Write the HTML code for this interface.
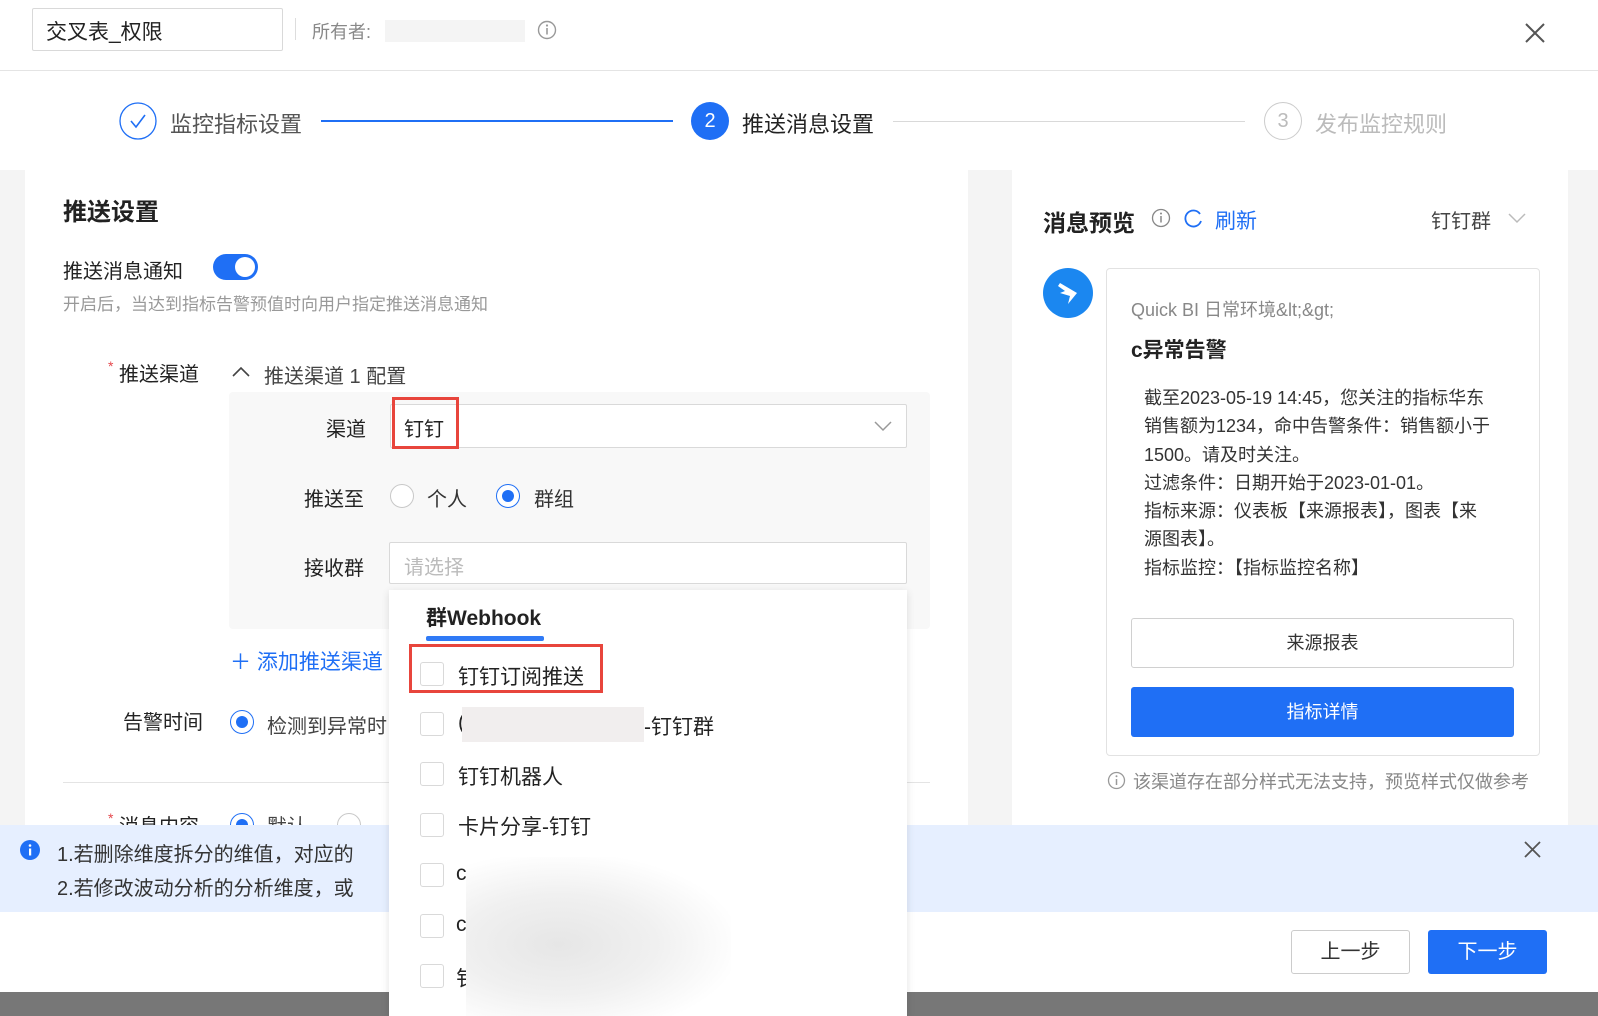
<!DOCTYPE html>
<html><head><meta charset="utf-8"><style>
*{margin:0;padding:0;box-sizing:border-box}
body{width:1598px;height:1016px;position:relative;overflow:hidden;background:#fff;font-family:"Liberation Sans","Noto Sans CJK SC",sans-serif;color:#333}
.a{position:absolute;white-space:nowrap}
.cb{position:absolute;width:24px;height:24px;border:1px solid #d9d9d9;border-radius:3px;background:#fff}
.radio{position:absolute;width:24px;height:24px;border:1px solid #c8c8c8;border-radius:50%;background:#fff}
.radio.on{border-color:#1f6ff5}
.radio.on::after{content:"";position:absolute;left:5px;top:5px;width:12px;height:12px;border-radius:50%;background:#1f6ff5}
</style></head><body>
<div class="a" style="left:32px;top:8px;width:251px;height:43px;border:1px solid #d9d9d9;border-radius:2px"></div>
<div class="a" style="left:46px;top:16px;font-size:21px;color:#222">交叉表_权限</div>
<div class="a" style="left:295px;top:18px;width:1px;height:22px;background:#ddd"></div>
<div class="a" style="left:312px;top:18px;font-size:18px;color:#888">所有者:</div>
<div class="a" style="left:385px;top:20px;width:140px;height:22px;background:#f4f4f4"></div>
<svg class="a" style="left:537px;top:20px" width="20" height="20"><circle cx="10" cy="10" r="8.5" fill="none" stroke="#999" stroke-width="1.4"/><line x1="10" y1="8" x2="10" y2="14.5" stroke="#999" stroke-width="1.6"/><circle cx="10" cy="5.5" r="1.1" fill="#999"/></svg>
<svg class="a" style="left:1524px;top:22px" width="22" height="22"><path d="M2 2L20 20M20 2L2 20" stroke="#555" stroke-width="2"/></svg>
<div class="a" style="left:0;top:70px;width:1598px;height:1px;background:#e4e4e4"></div>
<svg class="a" style="left:119px;top:102px" width="38" height="38"><circle cx="19" cy="19" r="18" fill="#fff" stroke="#1f6ff5" stroke-width="1.3"/><path d="M12 19l5 6 9-12" fill="none" stroke="#1f6ff5" stroke-width="1.6"/></svg>
<div class="a" style="left:170px;top:107px;font-size:22px;color:#555">监控指标设置</div>
<div class="a" style="left:321px;top:120px;width:352px;height:2px;background:#1f6ff5"></div>
<div class="a" style="left:691px;top:102px;width:38px;height:38px;border-radius:50%;background:#1f6ff5;color:#fff;font-size:20px;text-align:center;line-height:38px">2</div>
<div class="a" style="left:742px;top:107px;font-size:22px;color:#222">推送消息设置</div>
<div class="a" style="left:893px;top:121px;width:352px;height:1px;background:#d9d9d9"></div>
<div class="a" style="left:1264px;top:102px;width:38px;height:38px;border-radius:50%;border:1.3px solid #ccc;color:#bbb;font-size:20px;text-align:center;line-height:36px">3</div>
<div class="a" style="left:1315px;top:107px;font-size:22px;color:#bbb">发布监控规则</div>
<div class="a" style="left:0;top:170px;width:1598px;height:655px;background:#f4f4f4"></div>
<div class="a" style="left:25px;top:170px;width:943px;height:655px;background:#fff"></div>
<div class="a" style="left:1012px;top:170px;width:556px;height:655px;background:#fff"></div>
<div class="a" style="left:63px;top:192px;font-size:24px;font-weight:bold;color:#222">推送设置</div>
<div class="a" style="left:63px;top:255px;font-size:20px;color:#222">推送消息通知</div>
<div class="a" style="left:213px;top:254px;width:45px;height:26px;border-radius:13px;background:#1f6ff5"></div>
<div class="a" style="left:235px;top:257px;width:20px;height:20px;border-radius:50%;background:#fff"></div>
<div class="a" style="left:63px;top:290px;font-size:17px;color:#999">开启后，当达到指标告警预值时向用户指定推送消息通知</div>
<div class="a" style="left:108px;top:358px;font-size:20px;color:#222"><span style="color:#e5484d;font-size:14px;vertical-align:top">*</span> 推送渠道</div>
<svg class="a" style="left:232px;top:366px" width="18" height="12"><path d="M1 10l8-8 8 8" fill="none" stroke="#444" stroke-width="1.6"/></svg>
<div class="a" style="left:264px;top:360px;font-size:20px;color:#444">推送渠道 1 配置</div>
<div class="a" style="left:229px;top:392px;width:701px;height:237px;background:#f8f8f8;border-radius:4px"></div>
<div class="a" style="left:326px;top:413px;font-size:20px;color:#222">渠道</div>
<div class="a" style="left:390px;top:404px;width:517px;height:44px;background:#fff;border:1px solid #d9d9d9;border-radius:2px"></div>
<div class="a" style="left:392px;top:397px;width:67px;height:52px;border:3px solid #e8453c"></div>
<div class="a" style="left:404px;top:413px;font-size:20px;color:#222">钉钉</div>
<svg class="a" style="left:874px;top:420px" width="18" height="12"><path d="M1 2l8 8 8-8" fill="none" stroke="#999" stroke-width="1.5"/></svg>
<div class="a" style="left:304px;top:483px;font-size:20px;color:#222">推送至</div>
<div class="radio" style="left:390px;top:484px"></div>
<div class="a" style="left:427px;top:483px;font-size:20px;color:#333">个人</div>
<div class="radio on" style="left:496px;top:484px"></div>
<div class="a" style="left:534px;top:483px;font-size:20px;color:#333">群组</div>
<div class="a" style="left:304px;top:552px;font-size:20px;color:#222">接收群</div>
<div class="a" style="left:389px;top:542px;width:518px;height:42px;background:#fff;border:1px solid #d9d9d9;border-radius:2px"></div>
<div class="a" style="left:404px;top:551px;font-size:20px;color:#bbb">请选择</div>
<div class="a" style="left:230px;top:646px;font-size:21px;color:#1f6ff5">＋ 添加推送渠道</div>
<div class="a" style="left:123px;top:706px;font-size:20px;color:#222">告警时间</div>
<div class="radio on" style="left:230px;top:710px"></div>
<div class="a" style="left:267px;top:710px;font-size:20px;color:#444">检测到异常时</div>
<div class="a" style="left:63px;top:782px;width:867px;height:1px;background:#e4e4e4"></div>
<div class="a" style="left:108px;top:810px;font-size:20px;color:#222"><span style="color:#e5484d;font-size:14px;vertical-align:top">*</span> 消息内容</div>
<div class="radio on" style="left:230px;top:813px"></div>
<div class="a" style="left:267px;top:810px;font-size:20px;color:#444">默认</div>
<div class="radio" style="left:337px;top:813px"></div>
<div class="a" style="left:1043px;top:204px;font-size:23px;font-weight:bold;color:#222">消息预览</div>
<svg class="a" style="left:1151px;top:208px" width="20" height="20"><circle cx="10" cy="10" r="8.5" fill="none" stroke="#888" stroke-width="1.3"/><line x1="10" y1="8" x2="10" y2="14.5" stroke="#888" stroke-width="1.5"/><circle cx="10" cy="5.5" r="1" fill="#888"/></svg>
<svg class="a" style="left:1184px;top:208px" width="20" height="20"><path d="M16 6A8 8 0 1 0 17 13" fill="none" stroke="#1f6ff5" stroke-width="1.8"/></svg>
<div class="a" style="left:1215px;top:205px;font-size:21px;color:#1f6ff5">刷新</div>
<div class="a" style="left:1431px;top:205px;font-size:20px;color:#444">钉钉群</div>
<svg class="a" style="left:1508px;top:212px" width="18" height="12"><path d="M1 2l8 8 8-8" fill="none" stroke="#bbb" stroke-width="1.5"/></svg>
<div class="a" style="left:1043px;top:268px;width:50px;height:50px;border-radius:50%;background:#1b87f0"></div>
<svg class="a" style="left:1055px;top:280px" width="26" height="26"><path d="M5 3L22 13 13 24 15 16 5 13 10 11 3 6Z" fill="#fff"/></svg>
<div class="a" style="left:1106px;top:268px;width:434px;height:488px;border:1px solid #e2e2e2;border-radius:4px"></div>
<div class="a" style="left:1131px;top:296px;font-size:18px;color:#888">Quick BI 日常环境&amp;lt;&amp;gt;</div>
<div class="a" style="left:1131px;top:334px;font-size:21px;font-weight:bold;color:#222">c异常告警</div>
<div class="a" style="left:1144px;top:384px;font-size:18px;color:#333;line-height:28.3px;white-space:normal;width:350px">截至2023-05-19 14:45，您关注的指标华东销售额为1234，命中告警条件：销售额小于1500。请及时关注。<br>过滤条件：日期开始于2023-01-01。<br>指标来源：仪表板【来源报表】，图表【来源图表】。<br>指标监控：【指标监控名称】</div>
<div class="a" style="left:1131px;top:618px;width:383px;height:50px;border:1px solid #d0d0d0;border-radius:3px;text-align:center;line-height:48px;font-size:18px;color:#333">来源报表</div>
<div class="a" style="left:1131px;top:687px;width:383px;height:50px;background:#1f6ff5;border-radius:3px;text-align:center;line-height:50px;font-size:18px;color:#fff">指标详情</div>
<svg class="a" style="left:1107px;top:771px" width="19" height="19"><circle cx="9.5" cy="9.5" r="8" fill="none" stroke="#999" stroke-width="1.3"/><line x1="9.5" y1="8" x2="9.5" y2="14" stroke="#999" stroke-width="1.5"/><circle cx="9.5" cy="5.3" r="1" fill="#999"/></svg>
<div class="a" style="left:1133px;top:767px;font-size:18px;color:#888;line-height:31px;white-space:normal;width:398px">该渠道存在部分样式无法支持，预览样式仅做参考</div>
<div class="a" style="left:0;top:825px;width:1598px;height:87px;background:#e6efff"></div>
<svg class="a" style="left:20px;top:840px" width="20" height="20"><circle cx="10" cy="10" r="10" fill="#1f6ff5"/><rect x="9" y="8.5" width="2.2" height="7" fill="#fff"/><circle cx="10" cy="5.5" r="1.3" fill="#fff"/></svg>
<div class="a" style="left:57px;top:838px;font-size:20px;color:#333;line-height:34px">1.若删除维度拆分的维值，对应的</div>
<div class="a" style="left:57px;top:872px;font-size:20px;color:#333">2.若修改波动分析的分析维度，或</div>
<svg class="a" style="left:1523px;top:840px" width="19" height="19"><path d="M2 2L17 17M17 2L2 17" stroke="#555" stroke-width="1.8"/></svg>
<div class="a" style="left:1291px;top:930px;width:119px;height:44px;border:1px solid #ccc;border-radius:3px;text-align:center;line-height:42px;font-size:20px;color:#333">上一步</div>
<div class="a" style="left:1428px;top:930px;width:119px;height:44px;background:#1f6ff5;border-radius:3px;text-align:center;line-height:44px;font-size:20px;color:#fff">下一步</div>
<div class="a" style="left:0;top:992px;width:1598px;height:24px;background:#777"></div>
<div class="a" style="left:389px;top:590px;width:518px;height:426px;background:#fff;box-shadow:0 2px 8px rgba(0,0,0,.12)"></div>
<div class="a" style="left:426px;top:602px;font-size:21px;font-weight:bold;color:#222">群Webhook</div>
<div class="a" style="left:426px;top:636px;width:118px;height:5px;border-radius:2px;background:#2f7af6"></div>
<div class="a" style="left:409px;top:644px;width:194px;height:49px;border:3px solid #e8453c"></div>
<div class="cb" style="left:420px;top:662px"></div><div class="a" style="left:458px;top:661px;font-size:21px;color:#222">钉钉订阅推送</div>
<div class="cb" style="left:420px;top:712px"></div><div class="a" style="left:458px;top:711px;font-size:21px;color:#222">(</div>
<div class="a" style="left:462px;top:707px;width:182px;height:35px;background:#f1eeee"></div>
<div class="a" style="left:644px;top:711px;font-size:21px;color:#222">-钉钉群</div>
<div class="cb" style="left:420px;top:762px"></div><div class="a" style="left:458px;top:761px;font-size:21px;color:#222">钉钉机器人</div>
<div class="cb" style="left:420px;top:813px"></div><div class="a" style="left:458px;top:811px;font-size:21px;color:#222">卡片分享-钉钉</div>
<div class="cb" style="left:420px;top:863px"></div><div class="a" style="left:456px;top:862px;font-size:21px;color:#222">c</div>
<div class="cb" style="left:420px;top:914px"></div><div class="a" style="left:456px;top:913px;font-size:21px;color:#222">c</div>
<div class="cb" style="left:420px;top:964px"></div><div class="a" style="left:456px;top:963px;font-size:21px;color:#222">钅</div>
<div class="a" style="left:466px;top:857px;width:265px;height:159px;background:radial-gradient(ellipse at 35% 55%,#e6e6e6 0%,#f0f0f0 40%,#fff 75%)"></div>
</body></html>
